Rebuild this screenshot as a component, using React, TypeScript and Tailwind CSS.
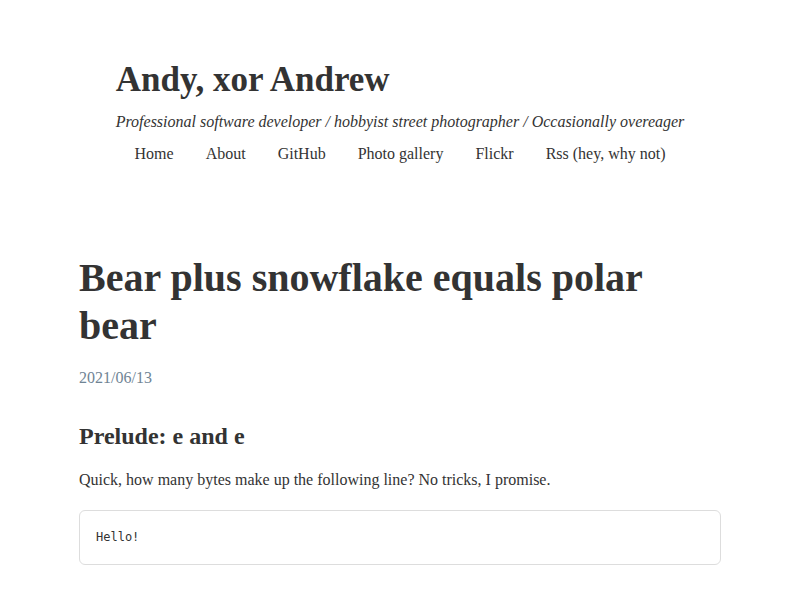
const navItems = ["Home", "About", "GitHub", "Photo gallery", "Flickr", "Rss (hey, why not)"];

const App = () => {
  return (
    <div className="min-h-screen bg-white text-[#333] font-['Liberation_Serif',serif]">
      <header className="flex flex-col items-center pt-[56px]">
        <div>
          <h1 className="text-[35px] font-bold leading-[48px]">Andy, xor Andrew</h1>
          <p className="text-[16px] italic leading-[24px] mt-[6px]">
            Professional software developer / hobbyist street photographer / Occasionally overeager
          </p>
        </div>
        <nav className="mt-[8px]">
          <ul className="flex gap-8 text-[16px] leading-[24px]">
            {navItems.map((item) => (
              <li key={item}>
                <a href="#" className="text-[#333]">{item}</a>
              </li>
            ))}
          </ul>
        </nav>
      </header>

      <main className="mx-[79px] mt-[88px]">
        <h1 className="text-[40px] font-bold leading-[48px]">Bear plus snowflake equals polar bear</h1>
        <p className="text-[16px] leading-[24px] text-[#6f8494] mt-[16px]">2021/06/13</p>
        <h2 className="text-[24px] font-bold leading-[32px] mt-[30px]">Prelude: e and e</h2>
        <p className="text-[16px] leading-[24px] mt-[16px]">
          Quick, how many bytes make up the following line? No tricks, I promise.
        </p>
        <pre className="mt-[18px] border border-[#ddd] rounded-[6px] px-4 py-[16px] font-['DejaVu_Sans_Mono',monospace] text-[12px] leading-[20px] h-[55px]">
          Hello!
        </pre>
      </main>
    </div>
  );
};

export default App;
